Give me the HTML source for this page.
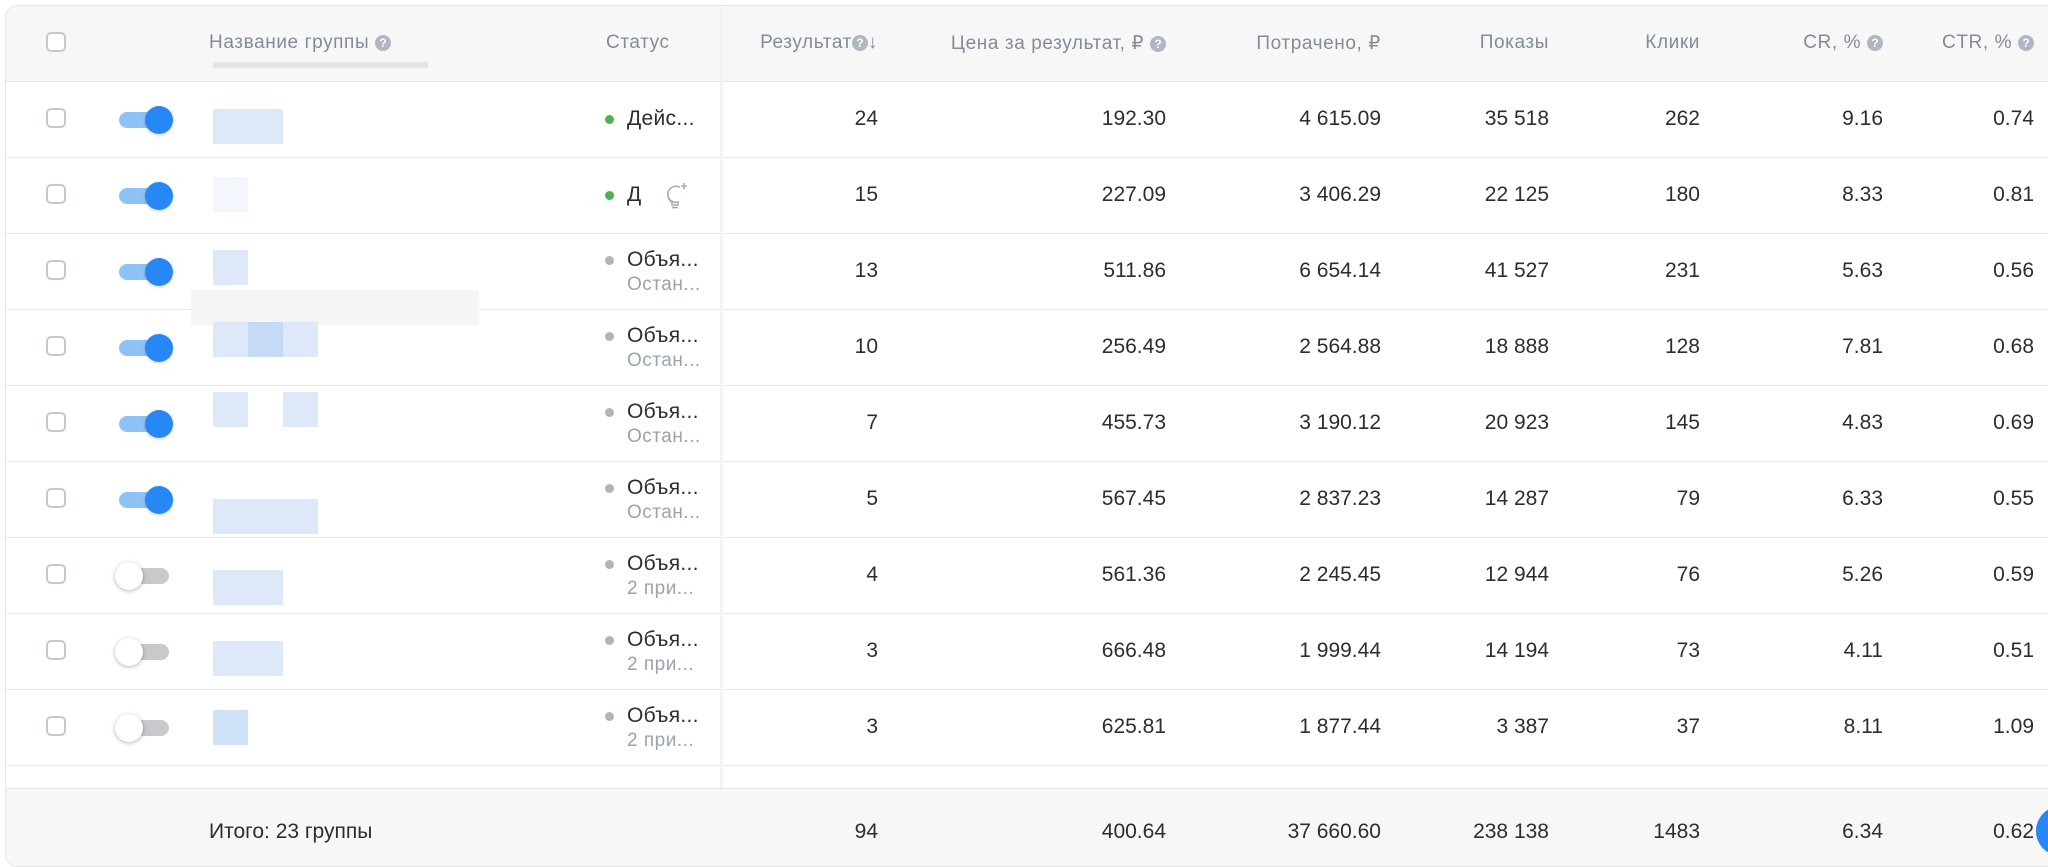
<!DOCTYPE html>
<html><head><meta charset="utf-8"><style>
body{margin:0;width:2048px;height:860px;background:#fff;font-family:"Liberation Sans",sans-serif;overflow:hidden;position:relative}
.tbl{position:absolute;left:5px;top:5px;width:2060px;height:860px;border:1px solid #e4e6ea;border-radius:12px;overflow:hidden;background:#fff}
.hd{position:absolute;left:0;top:0;right:0;height:75px;background:#f7f7f8;border-bottom:1px solid #e4e6ea}
.ft{position:absolute;left:0;top:782px;right:0;height:80px;background:#f7f7f8;border-top:1px solid #e4e6ea}
.vl{position:absolute;left:714px;top:0;width:3px;height:782px;background:#f2f3f5}
.row{position:absolute;left:0;right:0;height:76px;border-bottom:1px solid #e7e8ec}
.c{position:absolute;font-size:21px;color:#2c2d2e;white-space:nowrap;line-height:24px}
.h{position:absolute;top:26px;font-size:19px;letter-spacing:0.6px;color:#818c99;white-space:nowrap}
.n{top:26px}
.cb{position:absolute;left:40px;top:27px;width:20px;height:20px;border:2px solid #c4c8cf;border-radius:5px;box-sizing:border-box;background:#fff}
.tg{position:absolute;left:113px;top:31px;width:50px;height:16px;border-radius:8px;background:#8ec3f7}
.tg i{position:absolute;right:-4px;top:-6px;width:28px;height:28px;border-radius:50%;background:#2787f5;box-shadow:0 1px 3px rgba(0,0,0,.2)}
.tg.off{background:#c8c9cc}
.tg.off i{left:-4px;right:auto;background:#fff;box-shadow:0 1px 4px rgba(0,0,0,.3)}
.dot{position:absolute;left:599px;width:9px;height:9px;border-radius:50%}
.g{background:#4bb34b}.gr{background:#b0b3b8}
.s1{left:621px;letter-spacing:0.3px}
.s2{left:621px;color:#99a2ad;font-size:19px;letter-spacing:0.5px}
.q{display:inline-block;width:16px;height:16px;border-radius:50%;background:#aeb7c2;color:#fff;font-size:12px;line-height:16px;text-align:center;font-weight:bold;vertical-align:1px;letter-spacing:0}
.bl{position:absolute;background:#dde9f8}
</style></head><body>
<div class="tbl">
<div class="hd">
<div class="cb" style="top:26px"></div>
<div class="h" style="left:203px">Название группы <span class="q">?</span></div>
<div style="position:absolute;left:207px;top:56px;width:215px;height:6px;background:#e3e4e7"></div>
<div class="h" style="left:600px">Статус</div>
<div class="h" style="right:1188px">Результат<span class="q">?</span>↓</div>
<div class="h" style="right:900px">Цена за результат, ₽ <span class="q">?</span></div>
<div class="h" style="right:685px">Потрачено, ₽</div>
<div class="h" style="right:517px">Показы</div>
<div class="h" style="right:366px">Клики</div>
<div class="h" style="right:183px">CR, % <span class="q">?</span></div>
<div class="h" style="right:32px">CTR, % <span class="q">?</span></div>
</div>

<div class="row" style="top:75px"><div class="cb"></div><div class="tg"><i></i></div><div class="bl" style="left:207px;top:28px;width:70px;height:35px"></div><div class="dot g" style="top:34px"></div><div class="c s1 n">Дейс...</div>
<div class="c n" style="right:1188px">24</div><div class="c n" style="right:900px">192.30</div><div class="c n" style="right:685px">4 615.09</div><div class="c n" style="right:517px">35 518</div><div class="c n" style="right:366px">262</div><div class="c n" style="right:183px">9.16</div><div class="c n" style="right:32px">0.74</div></div>

<div class="row" style="top:151px"><div class="cb"></div><div class="tg"><i></i></div><div class="bl" style="left:207px;top:20px;width:35px;height:35px;background:#f3f7fd"></div><div class="dot g" style="top:34px"></div><div class="c s1 n">Д</div>
<svg style="position:absolute;left:657px;top:24px" width="28" height="30" viewBox="0 0 28 30" fill="none" stroke="#a5acb5" stroke-width="1.6"><path d="M17 6.5A8 8 0 1 0 15 21v3h-6v-3a8 8 0 0 1-4-7"/><path d="M9 26.5h6"/><path d="M21 2v6M18 5h6"/></svg>
<div class="c n" style="right:1188px">15</div><div class="c n" style="right:900px">227.09</div><div class="c n" style="right:685px">3 406.29</div><div class="c n" style="right:517px">22 125</div><div class="c n" style="right:366px">180</div><div class="c n" style="right:183px">8.33</div><div class="c n" style="right:32px">0.81</div></div>

<div class="row" style="top:227px"><div class="cb"></div><div class="tg"><i></i></div><div class="bl" style="left:207px;top:17px;width:35px;height:35px"></div><div class="dot gr" style="top:23px"></div><div class="c s1" style="top:15px">Объя...</div><div class="c s2" style="top:40px">Остан...</div>
<div class="c n" style="right:1188px">13</div><div class="c n" style="right:900px">511.86</div><div class="c n" style="right:685px">6 654.14</div><div class="c n" style="right:517px">41 527</div><div class="c n" style="right:366px">231</div><div class="c n" style="right:183px">5.63</div><div class="c n" style="right:32px">0.56</div></div>
<div style="position:absolute;left:185px;top:284px;width:288px;height:35px;background:#f5f5f7"></div>

<div class="row" style="top:303px"><div class="cb"></div><div class="tg"><i></i></div><div class="bl" style="left:207px;top:13px;width:105px;height:35px"></div><div class="bl" style="left:242px;top:13px;width:35px;height:35px;background:#c4daf5"></div><div class="dot gr" style="top:23px"></div><div class="c s1" style="top:15px">Объя...</div><div class="c s2" style="top:40px">Остан...</div>
<div class="c n" style="right:1188px">10</div><div class="c n" style="right:900px">256.49</div><div class="c n" style="right:685px">2 564.88</div><div class="c n" style="right:517px">18 888</div><div class="c n" style="right:366px">128</div><div class="c n" style="right:183px">7.81</div><div class="c n" style="right:32px">0.68</div></div>

<div class="row" style="top:379px"><div class="cb"></div><div class="tg"><i></i></div><div class="bl" style="left:207px;top:7px;width:35px;height:35px"></div><div class="bl" style="left:277px;top:7px;width:35px;height:35px"></div><div class="dot gr" style="top:23px"></div><div class="c s1" style="top:15px">Объя...</div><div class="c s2" style="top:40px">Остан...</div>
<div class="c n" style="right:1188px">7</div><div class="c n" style="right:900px">455.73</div><div class="c n" style="right:685px">3 190.12</div><div class="c n" style="right:517px">20 923</div><div class="c n" style="right:366px">145</div><div class="c n" style="right:183px">4.83</div><div class="c n" style="right:32px">0.69</div></div>

<div class="row" style="top:455px"><div class="cb"></div><div class="tg"><i></i></div><div class="bl" style="left:207px;top:38px;width:105px;height:35px"></div><div class="dot gr" style="top:23px"></div><div class="c s1" style="top:15px">Объя...</div><div class="c s2" style="top:40px">Остан...</div>
<div class="c n" style="right:1188px">5</div><div class="c n" style="right:900px">567.45</div><div class="c n" style="right:685px">2 837.23</div><div class="c n" style="right:517px">14 287</div><div class="c n" style="right:366px">79</div><div class="c n" style="right:183px">6.33</div><div class="c n" style="right:32px">0.55</div></div>

<div class="row" style="top:531px"><div class="cb"></div><div class="tg off"><i></i></div><div class="bl" style="left:207px;top:33px;width:70px;height:35px"></div><div class="dot gr" style="top:23px"></div><div class="c s1" style="top:15px">Объя...</div><div class="c s2" style="top:40px">2 при...</div>
<div class="c n" style="right:1188px">4</div><div class="c n" style="right:900px">561.36</div><div class="c n" style="right:685px">2 245.45</div><div class="c n" style="right:517px">12 944</div><div class="c n" style="right:366px">76</div><div class="c n" style="right:183px">5.26</div><div class="c n" style="right:32px">0.59</div></div>

<div class="row" style="top:607px"><div class="cb"></div><div class="tg off"><i></i></div><div class="bl" style="left:207px;top:28px;width:70px;height:35px"></div><div class="dot gr" style="top:23px"></div><div class="c s1" style="top:15px">Объя...</div><div class="c s2" style="top:40px">2 при...</div>
<div class="c n" style="right:1188px">3</div><div class="c n" style="right:900px">666.48</div><div class="c n" style="right:685px">1 999.44</div><div class="c n" style="right:517px">14 194</div><div class="c n" style="right:366px">73</div><div class="c n" style="right:183px">4.11</div><div class="c n" style="right:32px">0.51</div></div>

<div class="row" style="top:683px"><div class="cb"></div><div class="tg off"><i></i></div><div class="bl" style="left:207px;top:21px;width:35px;height:35px;background:#cfe1f7"></div><div class="dot gr" style="top:23px"></div><div class="c s1" style="top:15px">Объя...</div><div class="c s2" style="top:40px">2 при...</div>
<div class="c n" style="right:1188px">3</div><div class="c n" style="right:900px">625.81</div><div class="c n" style="right:685px">1 877.44</div><div class="c n" style="right:517px">3 387</div><div class="c n" style="right:366px">37</div><div class="c n" style="right:183px">8.11</div><div class="c n" style="right:32px">1.09</div></div>

<div class="vl"></div>
<div class="ft">
<div class="c" style="left:203px;top:31px">Итого: 23 группы</div>
<div class="c" style="right:1188px;top:31px">94</div><div class="c" style="right:900px;top:31px">400.64</div><div class="c" style="right:685px;top:31px">37 660.60</div><div class="c" style="right:517px;top:31px">238 138</div><div class="c" style="right:366px;top:31px">1483</div><div class="c" style="right:183px;top:31px">6.34</div><div class="c" style="right:32px;top:31px">0.62</div>
</div>
</div>
<div style="position:absolute;left:2036px;top:806px;width:50px;height:50px;border-radius:50%;background:#2787f5"></div>
</body></html>
